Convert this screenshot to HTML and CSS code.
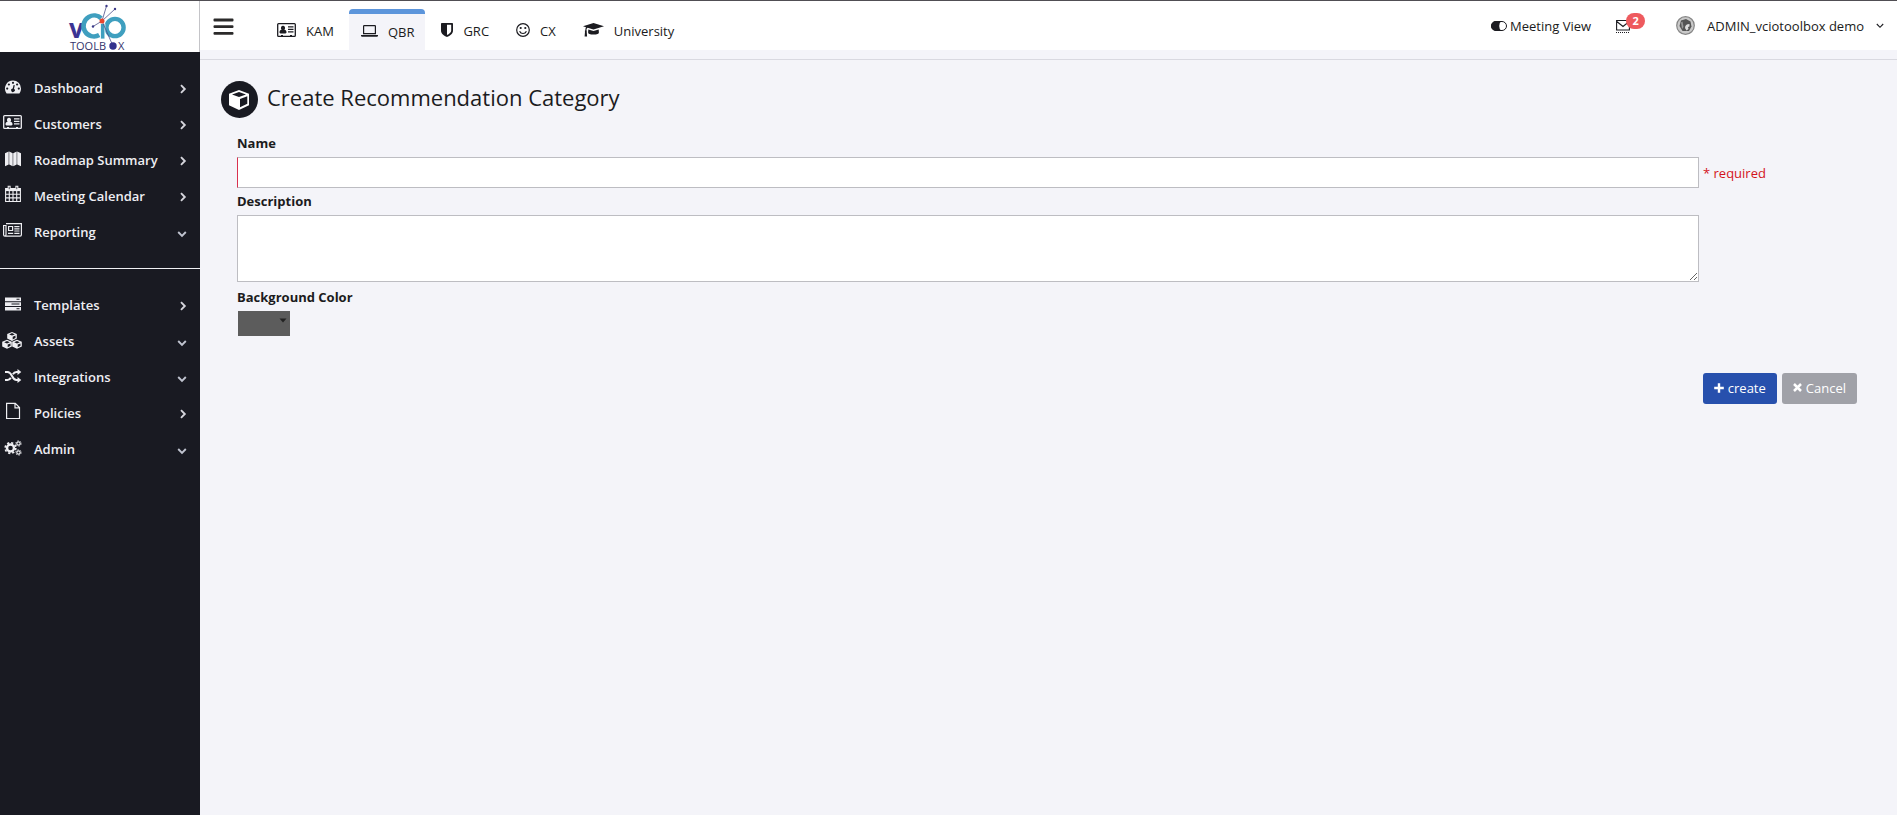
FILE: index.html
```html
<!DOCTYPE html>
<html lang="en">
<head>
<meta charset="utf-8">
<title>Create Recommendation Category</title>
<link rel="stylesheet" href="styles.css">
</head>
<body>
<svg class="sprite" aria-hidden="true">
  <symbol id="card" viewBox="0 0 19 14"><path fill="none" stroke="currentColor" stroke-width="1.3" d="M1.6.7h15.8q.9 0 .9.9v10.8q0 .9-.9.9H1.6q-.9 0-.9-.9V1.6q0-.9.9-.9z"/><path fill="currentColor" d="M6 2.7a2.1 2.3 0 0 1 1.4 4c1.3.2 2.1 1.100 2.100 2.600 0 .700-.4 1.200-1.100 1.200H3.600c-.7 0-1.100-.5-1.100-1.200 0-1.500.8-2.400 2.100-2.600A2.100 2.300 0 0 1 6 2.700zM11 3.300h5.500v1.100H11zM11 5.800h5.500v1.100H11zM11 8.300h5.500v1.100H11zM4 12h2v1.500H4zM13 12h2v1.500h-2z"/></symbol>
  <symbol id="chev-r" viewBox="0 0 8 10"><path d="M2 1.200 5.800 5 2 8.800" fill="none" stroke="currentColor" stroke-width="1.900"/></symbol>
  <symbol id="chev-d" viewBox="0 0 10 8"><path d="M1.200 2 5 5.800 8.800 2" fill="none" stroke="currentColor" stroke-width="1.900"/></symbol>
</svg>
<div class="app">
  <aside class="sidebar">
    <a class="logo" href="#" aria-label="vCIO Toolbox">
      <svg width="58" height="48" viewBox="0 0 58 48">
        <text class="logo-v" x="1" y="34">v</text>
        <circle cx="26" cy="22" r="10.500" fill="none" stroke="#3f9fbf" stroke-width="4.600" stroke-dasharray="46 20" transform="rotate(60 26 22)"/>
        <circle cx="47" cy="23.500" r="8.600" fill="none" stroke="#3f9fbf" stroke-width="4.400"/>
        <path d="M32.500 19.500h4.400V35h-4.400z" fill="#3f9fbf" stroke="#fff" stroke-width=".8"/>
        <path d="M34 17 38.500 2M34 17 47 5M34 17 25 22.500M34 17 45 42" fill="none" stroke="#4d4f8a" stroke-width=".8"/>
        <circle cx="38.500" cy="2" r="1.200" fill="#3b3988"/><circle cx="47" cy="5" r="1.200" fill="#3b3988"/><circle cx="25" cy="22.500" r="1.200" fill="#3b3988"/>
        <circle cx="34" cy="17" r="2.500" fill="#e9472f"/>
        <text class="logo-t" x="2" y="46">TOOLB</text><text class="logo-t" x="50" y="46">X</text>
        <circle cx="45" cy="42" r="3.700" fill="#33318c"/>
      </svg>
    </a>
    <nav class="menu" aria-label="Main">
      <a href="#"><svg class="ic" viewBox="0 0 18 16"><path fill="currentColor" fill-rule="evenodd" d="M9 1.500a8 8 0 0 1 8 8c0 1.700-.5 3.200-1.300 4.400-.2.400-.5.600-.9.600H3.200c-.4 0-.7-.2-.9-.6A8 8 0 0 1 9 1.500zM9 2.700a1.100 1.100 0 1 0 0 2.200 1.100 1.100 0 0 0 0-2.200zM4.900 4.400a1.100 1.100 0 1 0 0 2.200 1.100 1.100 0 0 0 0-2.200zm8.200 0a1.100 1.100 0 1 0 0 2.200 1.100 1.100 0 0 0 0-2.200zM3.200 8.500a1.100 1.100 0 1 0 0 2.200 1.100 1.100 0 0 0 0-2.200zm11.600 0a1.100 1.100 0 1 0 0 2.200 1.100 1.100 0 0 0 0-2.200zM9.600 6l-.9 3.400a1.800 1.800 0 1 0 1.300.3l.8-3.400z"/></svg><span>Dashboard</span><svg class="cr"><use href="#chev-r"/></svg></a>
      <a href="#"><svg class="ic wide"><use href="#card"/></svg><span>Customers</span><svg class="cr"><use href="#chev-r"/></svg></a>
      <a href="#"><svg class="ic" viewBox="0 0 18 16"><path fill="currentColor" d="M1 2.300 4.700.5v13L1 15.300zM5.200.5l3.500 1.800v13l-3.500-1.800zM9.200 2.300 12.700.5v13l-3.500 1.800zM13.200.5 17 2.300v13l-3.800-1.800z"/></svg><span>Roadmap Summary</span><svg class="cr"><use href="#chev-r"/></svg></a>
      <a href="#"><svg class="ic tall" viewBox="0 0 18 18"><path fill="none" stroke="currentColor" stroke-width="1.100" d="M1.600 3.500h14.800v13H1.600zM1.600 9.300h14.800M1.600 12.900h14.800M5.300 6v10.500M9 6v10.500M12.700 6v10.500"/><path fill="currentColor" d="M1.600 3.500h14.800v2.600H1.600z"/><path fill="#191a22" stroke="currentColor" stroke-width="1.100" d="M4.200 1.200h1.900v3.600H4.200zM11.900 1.200h1.900v3.600h-1.900z"/></svg><span>Meeting Calendar</span><svg class="cr"><use href="#chev-r"/></svg></a>
      <a href="#"><svg class="ic wide" viewBox="0 0 19 14"><path fill="none" stroke="currentColor" stroke-width="1.200" d="M3 .7h15.400v11.100q0 1.300-1.300 1.300H1.900Q.6 13.100.6 11.800V2.500H3v9.300q0 1.300-1.200 1.300M5.600 3.500h4v4h-4z"/><path fill="currentColor" d="M11.300 3h5.200v1.200h-5.200zM11.300 5.200h5.200v1.200h-5.200zM11.300 7.400h5.200v1.200h-5.200zM5 9.700h5.200v1.200H5zM11.300 9.700h5.200v1.200h-5.200z"/></svg><span>Reporting</span><svg class="cd"><use href="#chev-d"/></svg></a>
    </nav>
    <hr class="rule">
    <nav class="menu" aria-label="Setup">
      <a href="#"><svg class="ic" viewBox="0 0 18 16"><path fill="currentColor" fill-rule="evenodd" d="M1 1.500h16v3.700H1zm11.500 1.300v1h3v-1zM1 6.200h16v3.700H1zm6.500 1.300v1h8v-1zM1 10.900h16v3.700H1zm11.500 1.300v1h3v-1z"/></svg><span>Templates</span><svg class="cr"><use href="#chev-r"/></svg></a>
      <a href="#"><svg class="ic huge" viewBox="0 0 20 17"><g fill="currentColor"><path id="cube" fill-rule="evenodd" d="M10 0l4.800 2v4.600L10 9 5.200 6.600V2zm0 1.100L7.200 2.400 10 3.600l2.800-1.200zm.7 3.700v2.600l2.800-1.400V3.600z"/><use href="#cube" x="-5" y="7.800"/><use href="#cube" x="5" y="7.800"/></g></svg><span>Assets</span><svg class="cd"><use href="#chev-d"/></svg></a>
      <a href="#"><svg class="ic" viewBox="0 0 18 16"><path fill="none" stroke="currentColor" stroke-width="2" d="M1 4h2.500C8.500 4 7.500 12 12.500 12H14M1 12h2.500c1.700 0 2.600-1 3.300-2.300M8.900 6.300C9.600 5 10.700 4 12.500 4H14"/><path fill="currentColor" d="M13.500 1 17.300 4l-3.800 3zM13.500 9l3.800 3-3.800 3z"/></svg><span>Integrations</span><svg class="cd"><use href="#chev-d"/></svg></a>
      <a href="#"><svg class="ic tall" viewBox="0 0 18 18"><path fill="none" stroke="currentColor" stroke-width="1.200" d="M2.600 1.300h8.700l4.200 4.200v11H2.600zM11 1.500v4.300h4.300"/></svg><span>Policies</span><svg class="cr"><use href="#chev-r"/></svg></a>
      <a href="#"><svg class="ic" viewBox="0 0 18 16"><g fill="none" stroke="currentColor"><circle cx="6.500" cy="8" r="3.500" stroke-width="2.400"/><circle cx="6.500" cy="8" r="5.300" stroke-width="1.700" stroke-dasharray="2.200 1.963"/><circle cx="14.500" cy="3.500" r="1.700" stroke-width="1.200"/><circle cx="14.500" cy="3.500" r="2.700" stroke-width="1" stroke-dasharray="1.200 1.627"/><circle cx="14.500" cy="12.500" r="1.700" stroke-width="1.200"/><circle cx="14.500" cy="12.500" r="2.700" stroke-width="1" stroke-dasharray="1.200 1.627"/></g></svg><span>Admin</span><svg class="cd"><use href="#chev-d"/></svg></a>
    </nav>
  </aside>
  <div class="main">
    <header class="topbar">
      <button class="burger" type="button" aria-label="Toggle menu"><svg width="22" height="18" viewBox="0 0 22 18"><path fill="currentColor" d="M1.500 0.500h18q1 0 1 1v.9q0 1-1 1h-18q-1 0-1-1v-.9q0-1 1-1zM1.500 7.200h18q1 0 1 1v.9q0 1-1 1h-18q-1 0-1-1v-.9q0-1 1-1zM1.500 13.900h18q1 0 1 1v.9q0 1-1 1h-18q-1 0-1-1v-.9q0-1 1-1z"/></svg></button>
      <nav class="tabs" aria-label="Modules">
        <a href="#"><svg width="19" height="14"><use href="#card"/></svg>KAM</a>
        <a href="#" class="active"><svg width="17" height="14" viewBox="0 0 17 14"><path fill="none" stroke="currentColor" stroke-width="1.200" d="M3.200 1.600h10.600q.6 0 .6.600v7.400H2.600V2.200q0-.6.600-.6z"/><path fill="currentColor" d="M0 11h17v.8q0 1-1.200 1H1.200Q0 12.800 0 11.800z"/></svg>QBR</a>
        <a href="#"><svg width="12" height="14" viewBox="0 0 12 14"><path fill="currentColor" fill-rule="evenodd" d="M.8 0h10.400q.8 0 .8.800V7.500C12 11 9 12.800 6 14 3 12.800 0 11 0 7.500V.8Q0 0 .8 0zM6 1.800v10.200c2.200-1.100 4.200-2.400 4.200-4.500V1.800z"/></svg>GRC</a>
        <a href="#"><svg width="14" height="14" viewBox="0 0 14 14"><circle cx="7" cy="7" r="6.300" fill="none" stroke="currentColor" stroke-width="1.200"/><circle cx="4.700" cy="5" r="1.100" fill="currentColor"/><circle cx="9.300" cy="5" r="1.100" fill="currentColor"/><path d="M3.600 8.300Q4.600 10.500 7 10.500t3.400-2.200" fill="none" stroke="currentColor" stroke-width="1.200"/></svg>CX</a>
        <a href="#"><svg width="21" height="14" viewBox="0 0 21 14"><path fill="currentColor" d="M10.500 0 21 3.300 10.500 6.600 4.600 4.800q-1.200.6-1.200 2.500.7.400.3 1.500l.4 4.700H1.600L2 8.800q-.5-1 .3-1.500.1-1.800.7-3L0 3.300zM5.300 6.500l5.200 1.600 5.200-1.600.2 3q0 2.100-5.400 2.100t-5.400-2.100z"/></svg>University</a>
      </nav>
      <div class="tools">
        <a class="meeting" href="#"><svg width="16" height="10" viewBox="0 0 16 10"><rect x=".5" y=".5" width="15" height="9" rx="4.500" fill="#fff" stroke="currentColor"/><path fill="currentColor" d="M5 0h5.500q-2.300 1.400-2.300 5t2.300 5H5A5 5 0 0 1 5 0z"/></svg>Meeting View</a>
        <a class="mail" href="#" aria-label="Messages, 2 unread"><svg width="14" height="14" viewBox="0 0 14 14"><path fill="none" stroke="currentColor" stroke-width="1.100" d="M.6 1.500h12.800v9.500H.6zM.8 2.500 7 7.500l6.200-5"/><path d="M0 13.500h14" stroke="currentColor" stroke-dasharray="1 1"/></svg><span class="badge">2</span></a>
        <button class="user" type="button"><svg class="avatar" width="19" height="19" viewBox="0 0 19 19"><circle cx="9.500" cy="9.500" r="8.800" fill="#c9c9c9" stroke="#858585" stroke-width="1.200"/><path fill="#555" d="M5 4.500 10 3l4.500 2.500 1 5-2.500 4.500H6.500L3.500 10z"/><path fill="#ddd" d="M9 12q0-4 4.500-4v2.500l-1.500.5.500 2-2 1.500z"/><path fill="#999" d="m5 6.500 1.500-1 1 5.500L6 13z"/></svg><span>ADMIN_vciotoolbox demo</span><svg width="8" height="6" viewBox="0 0 8 6"><path d="M.8 1 4 4.300 7.200 1" fill="none" stroke="currentColor" stroke-width="1.100"/></svg></button>
      </div>
    </header>
    <main class="content">
      <div class="heading">
        <svg width="37" height="37" viewBox="0 0 37 37"><circle cx="18.500" cy="18.500" r="18.500" fill="#191a22"/><path fill="#fff" fill-rule="evenodd" d="m18 9 10 3.700v11.500L18 29 8 24.200V12.700zm0 1.900L11 13.500l7 2.600 7-2.600zM19 18v8.300l7.300-3.600v-7.400z"/></svg>
        <h1>Create Recommendation Category</h1>
      </div>
      <form class="form">
        <label for="name">Name</label>
        <div class="row"><input class="field" id="name" type="text" required><span class="required">* required</span></div>
        <label for="desc">Description</label>
        <div class="row last"><textarea class="field area" id="desc"></textarea><span class="required"></span></div>
        <label for="color">Background Color</label>
        <button class="swatch" id="color" type="button" aria-label="Background Color"><svg width="8" height="5" viewBox="0 0 8 5"><path fill="#222" d="M.5.500h7L4 4.500z"/></svg></button>
        <div class="actions">
          <button class="btn create" type="submit"><svg width="10" height="10" viewBox="0 0 10 10"><path d="M5 .2v9.600M.2 5h9.600" stroke="currentColor" stroke-width="2.400"/></svg>create</button>
          <button class="btn cancel" type="button"><svg width="9" height="9" viewBox="0 0 9 9"><path d="m1 1 7 7m0-7L1 8" stroke="currentColor" stroke-width="2.500"/></svg>Cancel</button>
        </div>
      </form>
    </main>
  </div>
</div>
</body>
</html>
```
FILE: styles.css
```css
* { box-sizing: border-box; }
body { margin: 0; font: 13px/18px "Open Sans", "Noto Sans", sans-serif; color: #1b1b20; background: #f4f4f9; }
a { color: inherit; text-decoration: none; }
button { font: inherit; color: inherit; border: 0; background: none; padding: 0; cursor: pointer; }
svg { display: block; flex: none; }
.sprite { width: 0; height: 0; position: absolute; }
.app { display: flex; min-height: 100vh; border-top: 1px solid #504e53; }

.sidebar { width: 200px; flex: none; background: #191a22; color: #eeeef2; }
.logo { display: flex; justify-content: center; height: 51px; padding: 3px 6px 0 0; background: #fff; border-right: 1px solid #c4c4c8; }
.logo-v { font: bold 26px "Open Sans", sans-serif; fill: #3b3494; }
.logo-t { font: 11px "Open Sans", sans-serif; fill: #34346c; }
.menu { display: flex; flex-direction: column; padding-top: 18px; }
.menu a { display: grid; grid-template-columns: 31px 1fr 10px; align-items: center; column-gap: 3px; height: 36px; padding-right: 13px; font-weight: 600; }
.ic { width: 18px; height: 16px; margin-left: 4px; margin-bottom: 2px; }
.ic.wide { width: 19px; height: 14px; margin-left: 3px; margin-bottom: 4px; }
.ic.tall { height: 18px; margin-bottom: 4px; }
.ic.huge { width: 20px; height: 17px; margin-left: 2px; }
.cr { width: 8px; height: 10px; margin-top: 2px; justify-self: end; color: #d5d5dc; }
.cd { width: 10px; height: 8px; margin-top: 4px; color: #c0c4d0; }
.rule { height: 1px; margin: 18px 0 0; border: 0; background: #f0f0f4; }

.main { flex: 1; min-width: 0; }
.topbar { display: flex; height: 49px; background: #fff; }
.burger { width: 22px; margin-left: 13px; padding-top: 3px; align-self: flex-start; height: 49px; color: #2b2a2a; }
.tabs { display: flex; gap: 4px; margin-left: 30px; padding-top: 8px; }
.tabs a { display: flex; align-items: center; gap: 10px; padding: 2px 11px 0 12px; }
.tabs svg { margin-bottom: 2px; }
.tabs .active { background: #f4f4f9; border-top: 5px solid #5c95db; border-radius: 4px 4px 0 0; }
.tabs .active { padding-top: 0; }
.tools { display: flex; align-items: center; height: 49px; margin-left: auto; padding-right: 13px; }
.meeting { display: flex; align-items: center; gap: 3px; }
.mail { position: relative; margin: 0 46px 0 25px; }
.badge { position: absolute; left: 10px; top: -6px; width: 19px; height: 16px; border-radius: 8px; background: #ee5a5e; color: #fff; font-size: 11px; font-weight: 700; line-height: 16px; text-align: center; }
.user { display: flex; align-items: center; }
.user span { margin: 0 12px; }

.content { margin-top: 9px; border-top: 1px solid #d9d9e0; padding: 21px 40px 40px 21px; }
.heading { display: flex; gap: 9px; align-items: center; height: 37px; }
h1 { margin: 0 0 6px; font-size: 22px; line-height: 30px; font-weight: 500; }
.form { display: flex; flex-direction: column; margin: 16px 0 0 16px; }
label { font-weight: 700; }
.row { display: flex; align-items: center; gap: 4px; margin: 5px 0 4px; }
.row.last { margin-bottom: 6px; }
.field { flex: 1; min-width: 0; height: 31px; margin: 0; padding: 4px 8px; border: 1px solid #bdbdc2; background: #fff; font: inherit; outline: 0; border-radius: 0; }
#name { border-left-color: #d9304f; }
.area { height: 67px; resize: vertical; display: block; }
.required { width: 154px; color: #d3131b; }
.swatch { display: flex; justify-content: flex-end; width: 52px; height: 25px; margin: 5px 0 0 1px; padding: 7px 3px; background: #5c5c5c; }
.actions { display: flex; justify-content: flex-end; gap: 5px; margin-top: 37px; }
.btn { display: flex; align-items: center; justify-content: center; gap: 4px; height: 31px; padding: 0 11px 2px; border-radius: 3px; color: #fff; }
.create { background: #2750ad; }
.cancel { background: #a0a1a8; }
```
